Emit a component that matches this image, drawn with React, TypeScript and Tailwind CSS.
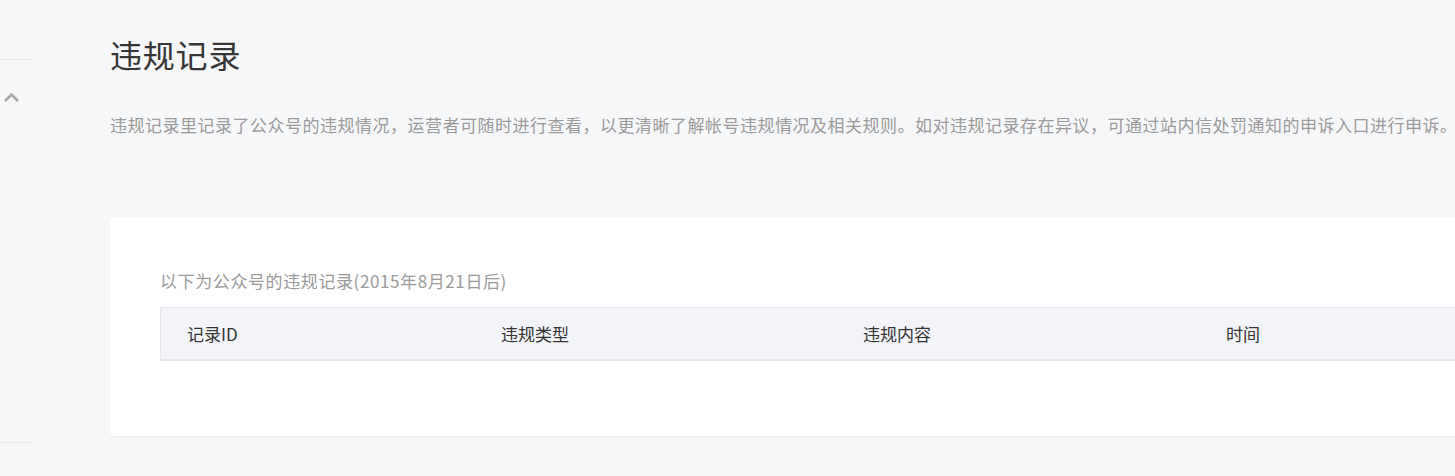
import React from 'react'

const columns = [
  { label: '记录ID', width: 'w-[314px]' },
  { label: '违规类型', width: 'w-[362px]' },
  { label: '违规内容', width: 'w-[363px]' },
  { label: '时间', width: 'w-[363px]' },
]

const Sidebar = () => (
  <div className="w-[32px] shrink-0 flex flex-col">
    <div className="h-[59px]" />
    <div className="h-px bg-[#e4e6ea]" />
    <div className="pt-[31px] pl-[3px]">
      <svg width="17" height="12" viewBox="0 0 17 12" fill="none">
        <polyline points="2,10 8.5,3.5 15,10" stroke="#a6a6a6" strokeWidth="2.6" />
      </svg>
    </div>
    <div className="flex-1" />
    <div className="h-px bg-[#e4e6ea] mb-[33px]" />
  </div>
)

export default function App() {
  return (
    <div
      className="h-[476px] w-[1455px] overflow-hidden bg-[#f6f7f9] flex"
      style={{ fontFamily: '"Noto Sans CJK SC", "Noto Sans", sans-serif' }}
    >
      <Sidebar />
      <main className="flex-1 pl-[78px] pt-[30px] min-w-0">
        <h1 className="text-[32px] leading-[48px] tracking-[0.8px] text-[#353535] font-normal">违规记录</h1>
        <p className="mt-[34px] text-[17px] leading-[26px] tracking-[0.5px] text-[#9a9a9a] whitespace-nowrap">
          违规记录里记录了公众号的违规情况，运营者可随时进行查看，以更清晰了解帐号违规情况及相关规则。如对违规记录存在异议，可通过站内信处罚通知的申诉入口进行申诉。
        </p>
        <section className="mt-[79px] w-[1460px] h-[219px] bg-white rounded-[4px] shadow-[0_1px_2px_rgba(0,0,0,0.04)] pl-[50px] pt-[51px]">
          <div className="text-[17px] leading-[26px] tracking-[0.6px] text-[#9a9a9a]">
            以下为公众号的违规记录(2015年8月21日后)
          </div>
          <div className="mt-[13px] flex h-[54px] bg-[#f3f4f7] border-t border-l border-[#e4e6ea] border-b-2 border-b-[#e4e6eb]">
            {columns.map((c) => (
              <div key={c.label} className={`${c.width} shrink-0 pl-[26px] flex items-center text-[17px] text-[#353535]`}>
                {c.label}
              </div>
            ))}
          </div>
        </section>
      </main>
    </div>
  )
}
